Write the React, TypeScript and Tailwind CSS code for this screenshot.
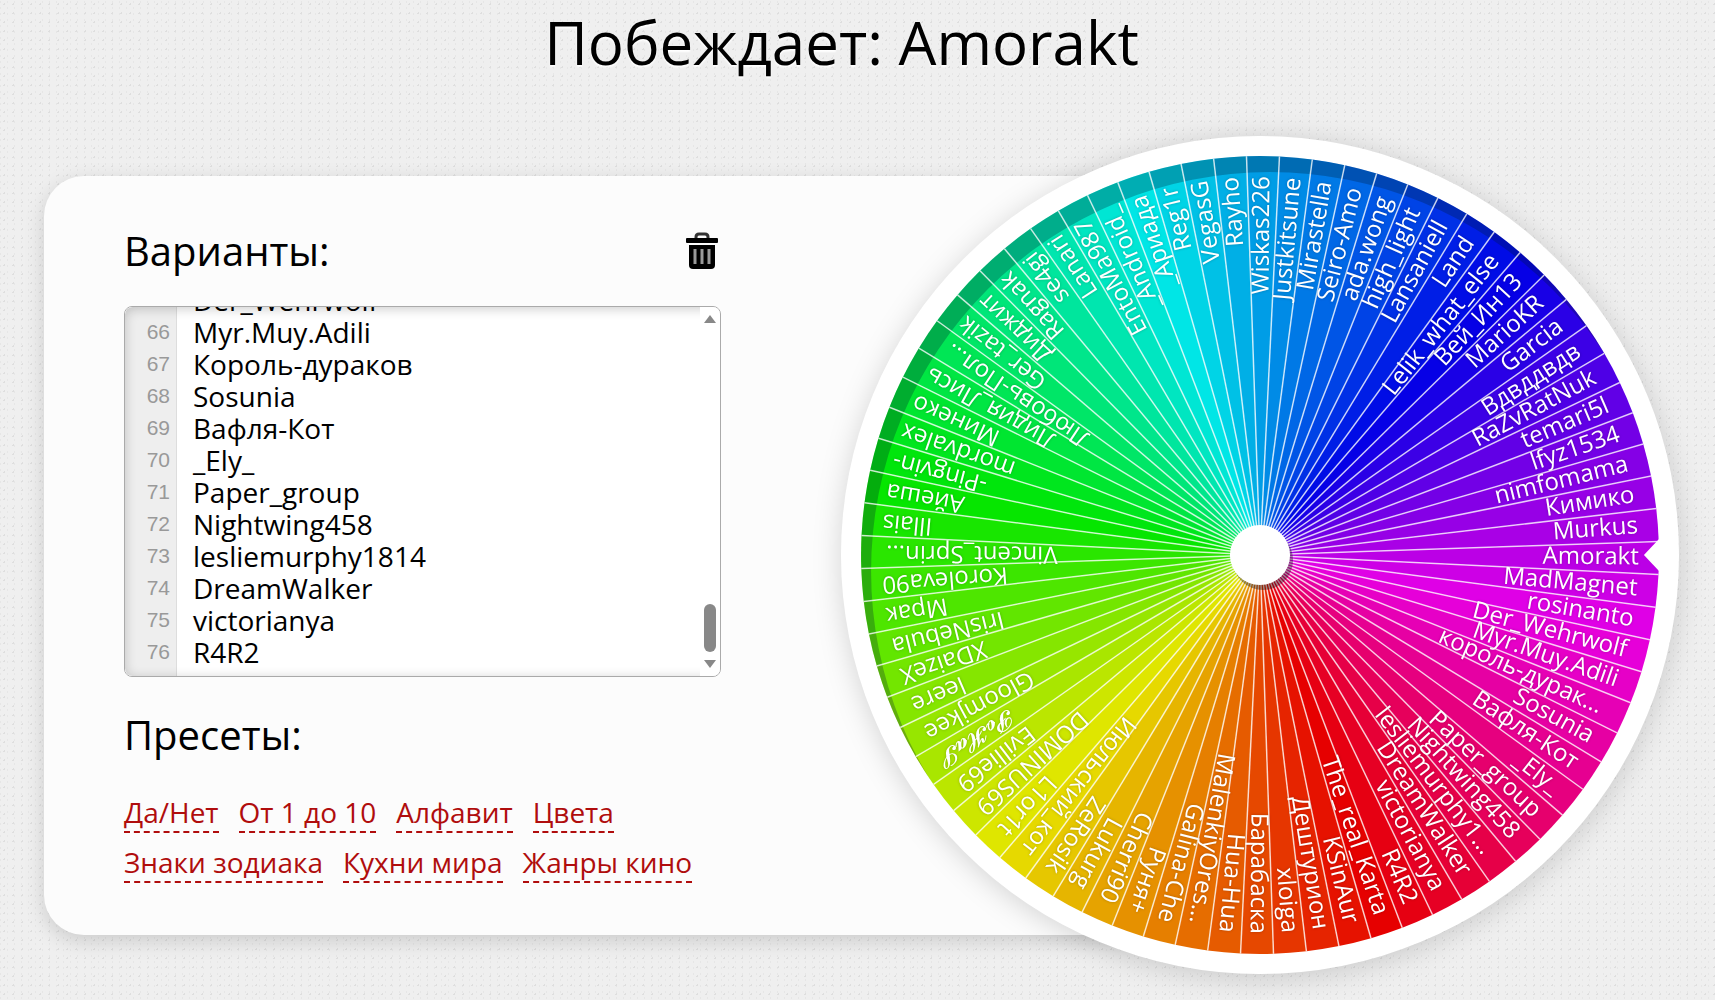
import { useLayoutEffect, useRef, useState } from "react";

const OPTIONS = [
  "The_real_Karta", "KSinAur", "Дештурион", "xloiga", "Барабаска", "Hua-Hua",
  "MalenkiyOreshek", "Galina-Che", "Руня+", "Cherri90", "Lukurg", "ZeRosik",
  "Июльский_кот", "L1or1t", "DOMINUS69", "Evillie69", "𝓟𝓸𝓗𝓪𝓢", "Gloomjkee",
  "leere", "XDaizeX", "IrisNebula", "Мрак", "Koroleva90", "Vincent_Springs",
  "Illais", "Айеша", "-Pingvin-", "mordvalex", "Минеко", "Лидия_Лись",
  "Любовь-Полина", "Ger_tazik", "Диджит", "Ragnak", "se4gi", "Lanari",
  "EntoMa987", "_Android_", "_Ариада", "Reg1r", "VegasG", "Rayho",
  "Wiskas226", "Justkitsune", "Mirastella", "Seiro-Amo", "ada.wong",
  "high_light", "Lansaniell", "Land", "Lelik_what_else", "Вей_Ин13",
  "MarioKR", "Garcia", "Вдвддвдв", "RaZvRatNuk", "temari5l", "lfyz1534",
  "nimfomama", "Кимико", "Murkus", "Amorakt", "MadMagnet", "rosinanto",
  "Der_Wehrwolf", "Myr.Muy.Adili", "Король-дураков", "Sosunia", "Вафля-Кот",
  "_Ely_", "Paper_group", "Nightwing458", "lesliemurphy1814", "DreamWalker",
  "victorianya", "R4R2",
];

// names too wide for their sector
const SHORT: Record<string, string> = {
  MalenkiyOreshek: "MalenkiyOres...",
  Vincent_Springs: "Vincent_Sprin...",
  "Любовь-Полина": "Любовь-Пол...",
  "Король-дураков": "король-дурак...",
  lesliemurphy1814: "lesliemurphy1...",
};

const PRESETS = [
  ["Да/Нет", "От 1 до 10", "Алфавит", "Цвета"],
  ["Знаки зодиака", "Кухни мира", "Жанры кино"],
];

const WINNER = OPTIONS.indexOf("Amorakt");
const STEP = 360 / OPTIONS.length;
const R = 398;

function point(angle: number, r: number) {
  const a = (angle * Math.PI) / 180;
  return `${(r * Math.cos(a)).toFixed(2)} ${(r * Math.sin(a)).toFixed(2)}`;
}

function Wheel() {
  return (
    <svg
      viewBox="-418 -418 836 836"
      className="relative w-[52%] max-w-[838px] shrink-0 overflow-visible rounded-full drop-shadow-[0_4px_14px_rgba(0,0,0,0.16)]"
      role="img"
      aria-label="Колесо"
    >
      <clipPath id="disc">
        <circle r={R} />
      </clipPath>
      <circle r="418" fill="#fff" />
      {OPTIONS.map((name, i) => {
        const from = (i - WINNER) * STEP - 1.94;
        return (
          <path
            key={name}
            d={`M0 0L${point(from, R)}A${R} ${R} 0 0 1 ${point(from + STEP, R)}Z`}
            fill={`hsl(${(i * STEP).toFixed(1)} 100% 45%)`}
          />
        );
      })}
      {/* rim shadow */}
      <path
        d="M-420 -420H420V420H-420ZM-388 16A398 398 0 0 0 408 16A398 398 0 0 0 -388 16Z"
        fill="#001a30"
        fillOpacity="0.28"
        fillRule="evenodd"
        clipPath="url(#disc)"
      />
      {OPTIONS.map((name, i) => (
        <path
          key={name}
          d={`M0 0L${point((i - WINNER) * STEP - 1.94, R)}`}
          stroke="#fff"
          strokeOpacity="0.75"
          strokeWidth="1.5"
        />
      ))}
      {OPTIONS.map((name, i) => (
        <text
          key={name}
          x={SHORT[name] ? 373 : 378}
          y="7"
          textAnchor="end"
          transform={`rotate(${((i - WINNER) * STEP + 0.35).toFixed(2)})`}
          className="fill-white text-[24px] [text-shadow:0_0_3px_rgba(0,0,0,0.25)]"
        >
          {SHORT[name] ?? name}
        </text>
      ))}
      <path d="M383 0L399 -17V17Z" fill="#fff" />
      <circle r="30" cx="3" cy="5" fill="#000" fillOpacity="0.35" />
      <circle r="30" fill="#fff" />
    </svg>
  );
}

function OptionsBox() {
  const [text, setText] = useState(OPTIONS.join("\n"));
  const [progress, setProgress] = useState(1);
  const area = useRef<HTMLTextAreaElement | null>(null);
  const gutter = useRef<HTMLDivElement | null>(null);

  function sync() {
    const el = area.current;
    if (!el || !gutter.current) return;
    gutter.current.scrollTop = el.scrollTop;
    setProgress(el.scrollTop / Math.max(1, el.scrollHeight - el.clientHeight));
  }

  useLayoutEffect(() => {
    if (area.current) area.current.scrollTop = area.current.scrollHeight;
    sync();
  }, []);

  return (
    <div className="relative flex h-[371px] overflow-hidden rounded-lg border border-[#aaa] bg-white">
      <div
        ref={gutter}
        className="w-[52px] shrink-0 overflow-hidden border-r border-[#ddd] bg-[#eee] py-2 pr-1.5 text-right font-['Liberation_Sans'] text-[21px] leading-8 whitespace-pre text-[#999]"
      >
        {text.split("\n").map((_, i) => i + 1).join("\n")}
      </div>
      <textarea
        id="options"
        ref={area}
        value={text}
        wrap="off"
        spellCheck={false}
        onChange={(e) => setText(e.target.value)}
        onScroll={sync}
        className="min-w-0 flex-1 resize-none py-2 pl-4 text-[28px] leading-8 text-black outline-none [scrollbar-width:none]"
      />
      <div className="relative z-10 flex w-5 shrink-0 flex-col items-center bg-white py-2">
        <svg viewBox="0 0 12 8" className="h-2 w-3" fill="#888">
          <path d="M0 8L6 0L12 8Z" />
        </svg>
        <div className="flex min-h-0 w-3 flex-1 flex-col pt-1 pb-2">
          <div style={{ flexGrow: progress }} />
          <div className="h-12 rounded-full bg-[#888]" />
          <div style={{ flexGrow: 1 - progress }} />
        </div>
        <svg viewBox="0 0 12 8" className="h-2 w-3" fill="#888">
          <path d="M0 0L6 8L12 0Z" />
        </svg>
      </div>
      <div className="pointer-events-none absolute inset-0 rounded-lg shadow-[inset_0_2px_12px_rgba(0,0,0,0.2)]" />
    </div>
  );
}

export default function App() {
  return (
    <div className="min-h-screen bg-[#efefef] bg-[radial-gradient(circle,#dedede_1px,transparent_1px),radial-gradient(circle,#e6e6e6_1px,transparent_1px)] bg-[size:9px_9px,7px_6px] bg-[position:0_0,4px_5px] font-['Open_Sans','Noto_Sans',sans-serif] text-black">
      <h1 className="pr-8 pb-8 text-center text-[60px] leading-[84px] [text-shadow:0_2px_2px_#fff]">
        Побеждает: {OPTIONS[WINNER]}
      </h1>

      <main className="flex items-center pt-5 pr-9 pl-11">
        <section className="mr-[-418px] min-w-0 flex-1 rounded-[40px] bg-[#fcfcfc] px-20 pt-12 pb-13 shadow-[0_6px_20px_rgba(0,0,0,0.15)]">
          <div className="max-w-[597px]">
            <div className="flex items-center justify-between">
              <label htmlFor="options" className="text-[40px] leading-[54px]">
                Варианты:
              </label>
              <button aria-label="Очистить" className="mr-0.5">
                <svg viewBox="0 0 34 38" className="h-[38px] w-[34px]">
                  <path d="M11 7V5Q11 2 14 2H20Q23 2 23 5V7" fill="none" stroke="#333" strokeWidth="3" />
                  <rect x="1" y="6" width="32" height="5" rx="1" fill="#000" />
                  <path d="M4 13H30V33Q30 37 26 37H8Q4 37 4 33Z" fill="#000" />
                  <path d="M10 17V32M17 17V32M24 17V32" stroke="#999" strokeWidth="3" />
                </svg>
              </button>
            </div>
            <div className="mt-7">
              <OptionsBox />
            </div>
            <h2 className="mt-7 text-[40px] leading-[60px]">Пресеты:</h2>
            <div className="mt-7 flex flex-col gap-2.5">
              {PRESETS.map((row, i) => (
                <div key={i} className="flex flex-wrap gap-x-5 gap-y-2.5">
                  {row.map((preset) => (
                    <a
                      key={preset}
                      href="#"
                      className="border-b-2 border-dashed border-[#b00d0d] text-[28px] leading-[38px] text-[#b00d0d]"
                    >
                      {preset}
                    </a>
                  ))}
                </div>
              ))}
            </div>
          </div>
        </section>
        <Wheel />
      </main>
    </div>
  );
}
